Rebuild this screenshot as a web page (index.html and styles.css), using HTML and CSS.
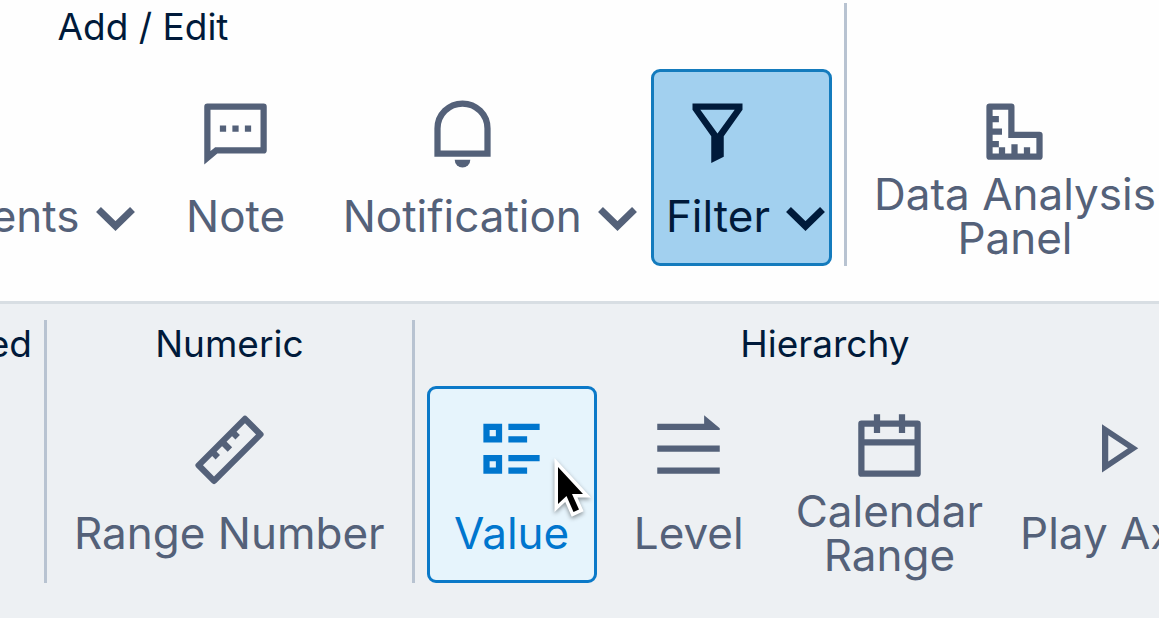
FILE: index.html
```html
<!DOCTYPE html>
<html lang="en">
<head>
    <meta charset="UTF-8">
    <meta name="viewport" content="width=device-width, initial-scale=1.0">
    <title>Ribbon</title>
    <link rel="stylesheet" href="styles.css">
</head>
<body>
    <div class="ribbon">
        <section class="group group-edit">
            <h2>Add / Edit</h2>
            <div class="tools">
                <button class="tool has-menu">
                    <span class="label">ents</span>
                    <svg class="chevron" viewBox="0 0 39 28"><path d="M2.5 7.5l17 16.500 17-16.500"/></svg>
                </button>
                <button class="tool">
                    <svg class="icon" viewBox="0 0 24 24">
                        <path fill-rule="evenodd" d="M3 4h18a1 1 0 0 1 1 1v14a1 1 0 0 1-1 1H6.200L2 23.500V5a1 1 0 0 1 1-1zM4 6v13.200L5.500 18H20V6z"/>
                        <path d="M7 11h2v2H7zM11 11h2v2h-2zM15 11h2v2h-2z"/>
                    </svg>
                    <span class="label">Note</span>
                </button>
                <button class="tool has-menu">
                    <svg class="icon" viewBox="0 0 24 24">
                        <path class="line" d="M4 20v-8a8 8 0 0 1 16 0v8z"/>
                        <path d="M9.500 22h5a2.500 2.500 0 0 1-5 0z"/>
                    </svg>
                    <span class="label">Notification</span>
                    <svg class="chevron" viewBox="0 0 39 28"><path d="M2.5 7.5l17 16.500 17-16.500"/></svg>
                </button>
                <button class="tool has-menu active">
                    <svg class="icon" viewBox="0 0 24 24">
                        <path fill-rule="evenodd" d="M4 4h16v2l-6 8.500V21l-4 2v-8.500L4 6zM6.500 6l5.500 7.600L17.500 6z"/>
                    </svg>
                    <span class="label">Filter</span>
                    <svg class="chevron" viewBox="0 0 39 28"><path d="M2.5 7.5l17 16.500 17-16.500"/></svg>
                </button>
            </div>
        </section>
        <section class="group">
            <h2></h2>
            <div class="tools">
                <button class="tool">
                    <svg class="icon" viewBox="0 0 24 24">
                        <path fill-rule="evenodd" d="M4 4h7a1 1 0 0 1 1 1v8h8a1 1 0 0 1 1 1v7a1 1 0 0 1-1 1H4a1 1 0 0 1-1-1V5a1 1 0 0 1 1-1zM5 6v2h2v2H5v2h3v2H5v2h2v2H5v2h2v-2h2v2h2v-3h2v3h2v-2h2v2h2v-5h-9V6z"/>
                    </svg>
                    <span class="label">Data Analysis<br>Panel</span>
                </button>
            </div>
        </section>
    </div>

    <div class="ribbon sub-ribbon">
        <section class="group group-cut">
            <h2>ed</h2>
        </section>
        <section class="group">
            <h2>Numeric</h2>
            <div class="tools">
                <button class="tool">
                    <svg class="icon" viewBox="0 0 24 24">
                        <g class="line" transform="rotate(-45 12 13.400)">
                            <rect x="1.500" y="9.900" width="21" height="7" stroke-linejoin="round"/>
                            <path d="M7.700 10v2.400M12.200 10v3.400M16.700 10v2.400"/>
                        </g>
                    </svg>
                    <span class="label">Range Number</span>
                </button>
            </div>
        </section>
        <section class="group">
            <h2>Hierarchy</h2>
            <div class="tools">
                <button class="tool hovered">
                    <svg class="icon" viewBox="0 0 24 24">
                        <path fill-rule="evenodd" d="M3 5h6v6H3zM5 7v2h2V7zM3 15h6v6H3zM5 17v2h2v-2z"/>
                        <path d="M11 5h10v2H11zM11 9h6v2h-6zM11 15h10v2H11zM11 19h6v2h-6z"/>
                    </svg>
                    <span class="label">Value</span>
                    <svg class="cursor" viewBox="0 0 40 62">
                        <path d="M6 8v37l8.500-8 7 16 5.500-2.500-7-15.500h11z"/>
                    </svg>
                </button>
                <button class="tool">
                    <svg class="icon" viewBox="0 0 24 24">
                        <path d="M2 5h15V2.300l5 4.200V7H2zM2 12h20v2H2zM2 19h20v2H2z"/>
                    </svg>
                    <span class="label">Level</span>
                </button>
                <button class="tool">
                    <svg class="icon" viewBox="0 0 24 24">
                        <path fill-rule="evenodd" d="M7 2h2v2h6V2h2v2h4a1 1 0 0 1 1 1v16a1 1 0 0 1-1 1H3a1 1 0 0 1-1-1V5a1 1 0 0 1 1-1h4zM4 6v4h16V6h-3v2h-2V6H9v2H7V6zM4 12v8h16v-8z"/>
                    </svg>
                    <span class="label">Calendar<br>Range</span>
                </button>
                <button class="tool">
                    <svg class="icon" viewBox="0 0 24 24">
                        <path fill-rule="evenodd" d="M8 5.200l11.600 7.700L8 20.600zM10 8.700v8.400l6.300-4.200z"/>
                    </svg>
                    <span class="label">Play Axis</span>
                </button>
            </div>
        </section>
    </div>
</body>
</html>
```
FILE: styles.css
```css
* {
    box-sizing: border-box;
}

body {
    margin: 0;
    min-height: 100vh;
    background: #edf0f3;
    font-family: Inter, "Liberation Sans", sans-serif;
    font-optical-sizing: none;
    overflow: hidden;
}

.ribbon {
    display: flex;
    padding: 3px 0 35px;
    background: #fefefe;
    overflow: hidden;
}

.sub-ribbon {
    padding-top: 16px;
    border-top: 3px solid #d8dee3;
    background: #edf0f3;
}

.group {
    flex: none;
    padding: 0 12px;
    border-right: 3px solid #b8c3d1;
}

.group:last-child {
    border-right: none;
}

/* the ribbon is scrolled, so the first groups run off the left edge */
.group-edit {
    width: 1405px;
    margin-left: -558px;
}

.group-edit .tools {
    justify-content: flex-end;
}

.group-cut {
    display: flex;
    justify-content: flex-end;
    width: 47px;
}

h2 {
    height: 48px;
    margin: 0 0 18px;
    font-size: 37px;
    line-height: 48px;
    font-weight: 400;
    text-align: center;
    color: #001a3a;
}

.tools {
    display: flex;
    gap: 7px;
}

.tool {
    position: relative;
    display: grid;
    grid-template-rows: 75px 86px;
    row-gap: 7px;
    justify-content: center;
    justify-items: center;
    align-items: center;
    flex: none;
    min-width: 170px;
    padding: 19px 12px 4px;
    border: 3px solid transparent;
    border-radius: 9px;
    background: transparent;
    color: #546179;
    font-family: inherit;
    font-size: 44px;
    line-height: 44px;
    text-align: center;
    white-space: nowrap;
    cursor: pointer;
}

.has-menu {
    grid-template-columns: auto 39px;
    column-gap: 16px;
    padding-right: 4px;
}

.active {
    border-color: #147bbd;
    background: #a2d0ef;
    color: #001a3a;
}

.hovered {
    border-color: #0b79c8;
    background: #e6f4fc;
    color: #0076ce;
}

.label {
    grid-row: 2;
    grid-column: 1;
}

.icon {
    grid-row: 1;
    grid-column: 1;
    width: 75px;
    height: 75px;
    overflow: visible;
    fill: currentColor;
}

.icon .line {
    fill: none;
    stroke: currentColor;
    stroke-width: 2;
}

.chevron {
    grid-row: 2;
    grid-column: 2;
    width: 39px;
    height: 28px;
    overflow: visible;
    fill: none;
    stroke: currentColor;
    stroke-width: 7;
}

.cursor {
    position: absolute;
    top: 70px;
    right: 2px;
    width: 40px;
    height: 62px;
    overflow: visible;
    fill: #000;
    stroke: #fff;
    stroke-width: 7;
    paint-order: stroke;
    filter: drop-shadow(0 2px 2px rgba(0, 0, 0, 0.4));
}
```
